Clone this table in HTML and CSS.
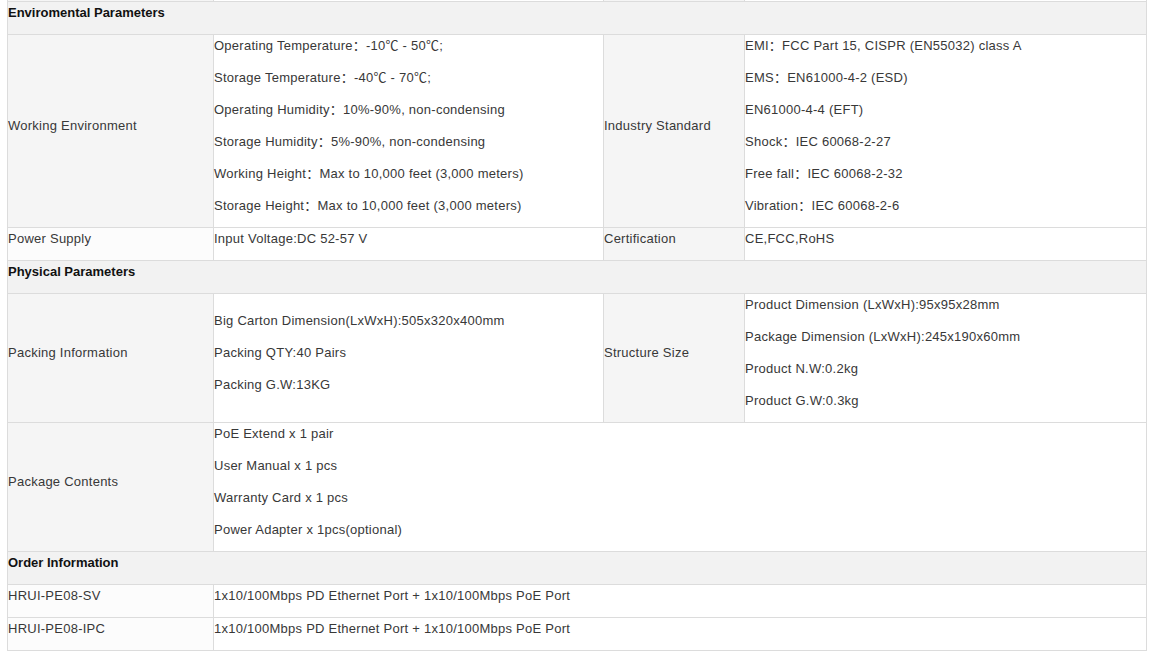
FILE: index.html
```html
<!DOCTYPE html>
<html>
<head>
<meta charset="utf-8">
<link rel="stylesheet" href="styles.css">
</head>
<body>
<div class="wrap">
<table class="spec">
  <colgroup>
    <col class="c1"><col class="c2"><col class="c3"><col class="c4">
  </colgroup>
  <tr class="prev">
    <td class="lbl"><p>&nbsp;</p></td><td><p>&nbsp;</p></td><td class="lbl"><p>&nbsp;</p></td><td><p>&nbsp;</p></td>
  </tr>
  <tr class="head"><td colspan="4"><p>Enviromental Parameters</p></td></tr>
  <tr>
    <td class="lbl"><p>Working Environment</p></td>
    <td>
      <p>Operating Temperature：-10℃ - 50℃;</p>
      <p>Storage Temperature：-40℃ - 70℃;</p>
      <p>Operating Humidity：10%-90%, non-condensing</p>
      <p>Storage Humidity：5%-90%, non-condensing</p>
      <p>Working Height：Max to 10,000 feet (3,000 meters)</p>
      <p>Storage Height：Max to 10,000 feet (3,000 meters)</p>
    </td>
    <td class="lbl"><p>Industry Standard</p></td>
    <td>
      <p>EMI：FCC Part 15, CISPR (EN55032) class A</p>
      <p>EMS：EN61000-4-2 (ESD)</p>
      <p>EN61000-4-4 (EFT)</p>
      <p>Shock：IEC 60068-2-27</p>
      <p>Free fall：IEC 60068-2-32</p>
      <p>Vibration：IEC 60068-2-6</p>
    </td>
  </tr>
  <tr>
    <td class="lbl light"><p>Power Supply</p></td>
    <td><p>Input Voltage:DC 52-57 V</p></td>
    <td class="lbl"><p>Certification</p></td>
    <td><p>CE,FCC,RoHS</p></td>
  </tr>
  <tr class="head"><td colspan="4"><p>Physical Parameters</p></td></tr>
  <tr>
    <td class="lbl"><p>Packing Information</p></td>
    <td>
      <p>Big Carton Dimension(LxWxH):505x320x400mm</p>
      <p>Packing QTY:40 Pairs</p>
      <p>Packing G.W:13KG</p>
    </td>
    <td class="lbl"><p>Structure Size</p></td>
    <td>
      <p>Product Dimension (LxWxH):95x95x28mm</p>
      <p>Package Dimension (LxWxH):245x190x60mm</p>
      <p>Product N.W:0.2kg</p>
      <p>Product G.W:0.3kg</p>
    </td>
  </tr>
  <tr>
    <td class="lbl"><p>Package Contents</p></td>
    <td colspan="3">
      <p>PoE Extend x 1 pair</p>
      <p>User Manual x 1 pcs</p>
      <p>Warranty Card x 1 pcs</p>
      <p>Power Adapter x 1pcs(optional)</p>
    </td>
  </tr>
  <tr class="head"><td colspan="4"><p>Order Information</p></td></tr>
  <tr>
    <td class="lbl light"><p>HRUI-PE08-SV</p></td>
    <td colspan="3"><p>1x10/100Mbps PD Ethernet Port + 1x10/100Mbps PoE Port</p></td>
  </tr>
  <tr>
    <td class="lbl light"><p>HRUI-PE08-IPC</p></td>
    <td colspan="3"><p>1x10/100Mbps PD Ethernet Port + 1x10/100Mbps PoE Port</p></td>
  </tr>
</table>
</div>
</body>
</html>
```

FILE: styles.css
```css
html, body {
  margin: 0;
  padding: 0;
  background: #ffffff;
}
body {
  padding-left: 7px;
  overflow: hidden;
  height: 654px;
}
.wrap {
  width: 1139px;
  border-right: 1px solid #2a2a2a;
  margin-top: -32px;
}
.spec {
  width: 1139px;
  table-layout: fixed;
  border-collapse: collapse;
  font-family: "Liberation Sans", Arial, "Noto Sans CJK SC", sans-serif;
  font-size: 13px;
  letter-spacing: 0.25px;
  color: #383838;
}
.c1 { width: 206px; }
.c2 { width: 390px; }
.c3 { width: 141px; }
.c4 { width: 402px; }
.spec td {
  border: 1px solid #dcdcdc;
  padding: 0;
  vertical-align: middle;
  background: #ffffff;
}
.spec td.lbl {
  background: #f5f5f5;
}
.spec td.lbl.light {
  background: #fcfcfc;
}
.spec p {
  margin: 0 0 10px 0;
  line-height: 22px;
  white-space: nowrap;
}
.spec tr.head td {
  background: #f2f2f2;
  font-weight: bold;
  letter-spacing: 0;
  color: #111111;
}
```
